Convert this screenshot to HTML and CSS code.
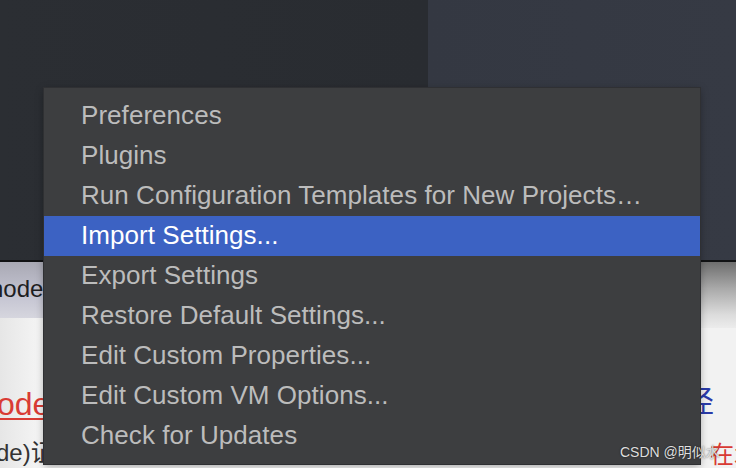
FILE: index.html
```html
<!DOCTYPE html>
<html>
<head>
<meta charset="utf-8">
<link rel="stylesheet" href="styles.css">
</head>
<body>
<div class="screen">
  <div class="ide">
    <div class="ide-left"></div>
    <div class="ide-right"></div>
  </div>
  <div class="divider"></div>
  <div class="page">
    <div class="gutter-left">
      <div class="band"><span class="word">node</span></div>
      <div class="gap"></div>
      <div class="link-line"><span class="red-link">ode</span></div>
      <div class="tail-line">de)证</div>
    </div>
    <div class="gutter-mid"></div>
    <div class="gutter-right">
      <div class="grey-top"></div>
      <div class="blue-char">径</div>
      <div class="red-tail">在木</div>
    </div>
  </div>

  <ul class="menu">
    <li class="item">Preferences</li>
    <li class="item">Plugins</li>
    <li class="item">Run Configuration Templates for New Projects…</li>
    <li class="item selected">Import Settings...</li>
    <li class="item">Export Settings</li>
    <li class="item">Restore Default Settings...</li>
    <li class="item">Edit Custom Properties...</li>
    <li class="item">Edit Custom VM Options...</li>
    <li class="item">Check for Updates</li>
  </ul>

  <div class="watermark">CSDN @明似水</div>
</div>
</body>
</html>
```

FILE: styles.css
```css
html, body {
  margin: 0;
  padding: 0;
  width: 736px;
  height: 468px;
  overflow: hidden;
  background: #f4f4f4;
}

.screen {
  position: relative;
  width: 736px;
  height: 468px;
  overflow: hidden;
  font-family: "Liberation Sans", Arial, "Noto Sans CJK SC", sans-serif;
}

.ide {
  display: flex;
  height: 260px;
}

.ide-left {
  width: 428px;
  background: linear-gradient(90deg, #2b2e33, #292c31);
}

.ide-right {
  flex: 1;
  background: linear-gradient(90deg, #343842, #363a44);
}

.divider {
  height: 2px;
  background: #111214;
}

.page {
  display: flex;
  height: 206px;
}

.gutter-left {
  width: 44px;
  overflow: hidden;
  display: flex;
  flex-direction: column;
  background: linear-gradient(90deg, #e6e6e6, #f6f6f6);
}

.band {
  height: 60px;
  background: linear-gradient(180deg, #a9a9b4 0%, #c4c4d2 60%, #d6d6de 100%);
  display: flex;
  align-items: center;
  white-space: nowrap;
}

.word {
  font-size: 24px;
  color: #1e1e22;
  margin-left: -10px;
  margin-top: -2px;
}

.gap {
  height: 70px;
}

.link-line {
  height: 44px;
  white-space: nowrap;
  display: flex;
  align-items: center;
}

.red-link {
  font-size: 32px;
  color: #d93b34;
  text-decoration: underline;
  text-decoration-thickness: 2px;
  text-underline-offset: 3px;
  margin-left: -3px;
}

.tail-line {
  font-size: 24px;
  color: #333;
  white-space: nowrap;
  margin-left: -4px;
  margin-top: 8px;
}

.gutter-mid {
  width: 656px;
}

.gutter-right {
  flex: 1;
  display: flex;
  flex-direction: column;
  background: #f2f2f2;
  overflow: hidden;
}

.grey-top {
  height: 80px;
  background: linear-gradient(180deg, #6e6e6e 0%, #a9a9a9 40%, #dcdcdc 80%, #ececec 100%);
}

.blue-char {
  margin-top: 54px;
  font-size: 30px;
  line-height: 34px;
  color: #2a3aa8;
  margin-left: -16px;
  font-family: "Noto Sans CJK SC", sans-serif;
}

.red-tail {
  margin-top: 22px;
  font-size: 24px;
  line-height: 30px;
  color: #d83a34;
  white-space: nowrap;
  margin-left: 10px;
  font-family: "Noto Sans CJK SC", sans-serif;
}

.menu {
  position: absolute;
  left: 44px;
  top: 88px;
  width: 656px;
  margin: 0;
  padding: 8px 0;
  list-style: none;
  background: #3d3e40;
  box-shadow: 0 0 0 1px #2f3033, 0 2px 8px rgba(0, 0, 0, 0.35);
}

.item {
  height: 40px;
  line-height: 39px;
  padding-left: 37px;
  font-size: 26px;
  letter-spacing: 0.05px;
  color: #bcbcbc;
  white-space: nowrap;
}

.item.selected {
  background: #3c62c3;
  color: #ffffff;
}

.watermark {
  position: absolute;
  left: 620px;
  top: 441px;
  font-size: 14px;
  color: #dedede;
  text-shadow: 0 0 2px rgba(0, 0, 0, 0.6);
  font-family: "Liberation Sans", "Noto Sans CJK SC", sans-serif;
}
```
